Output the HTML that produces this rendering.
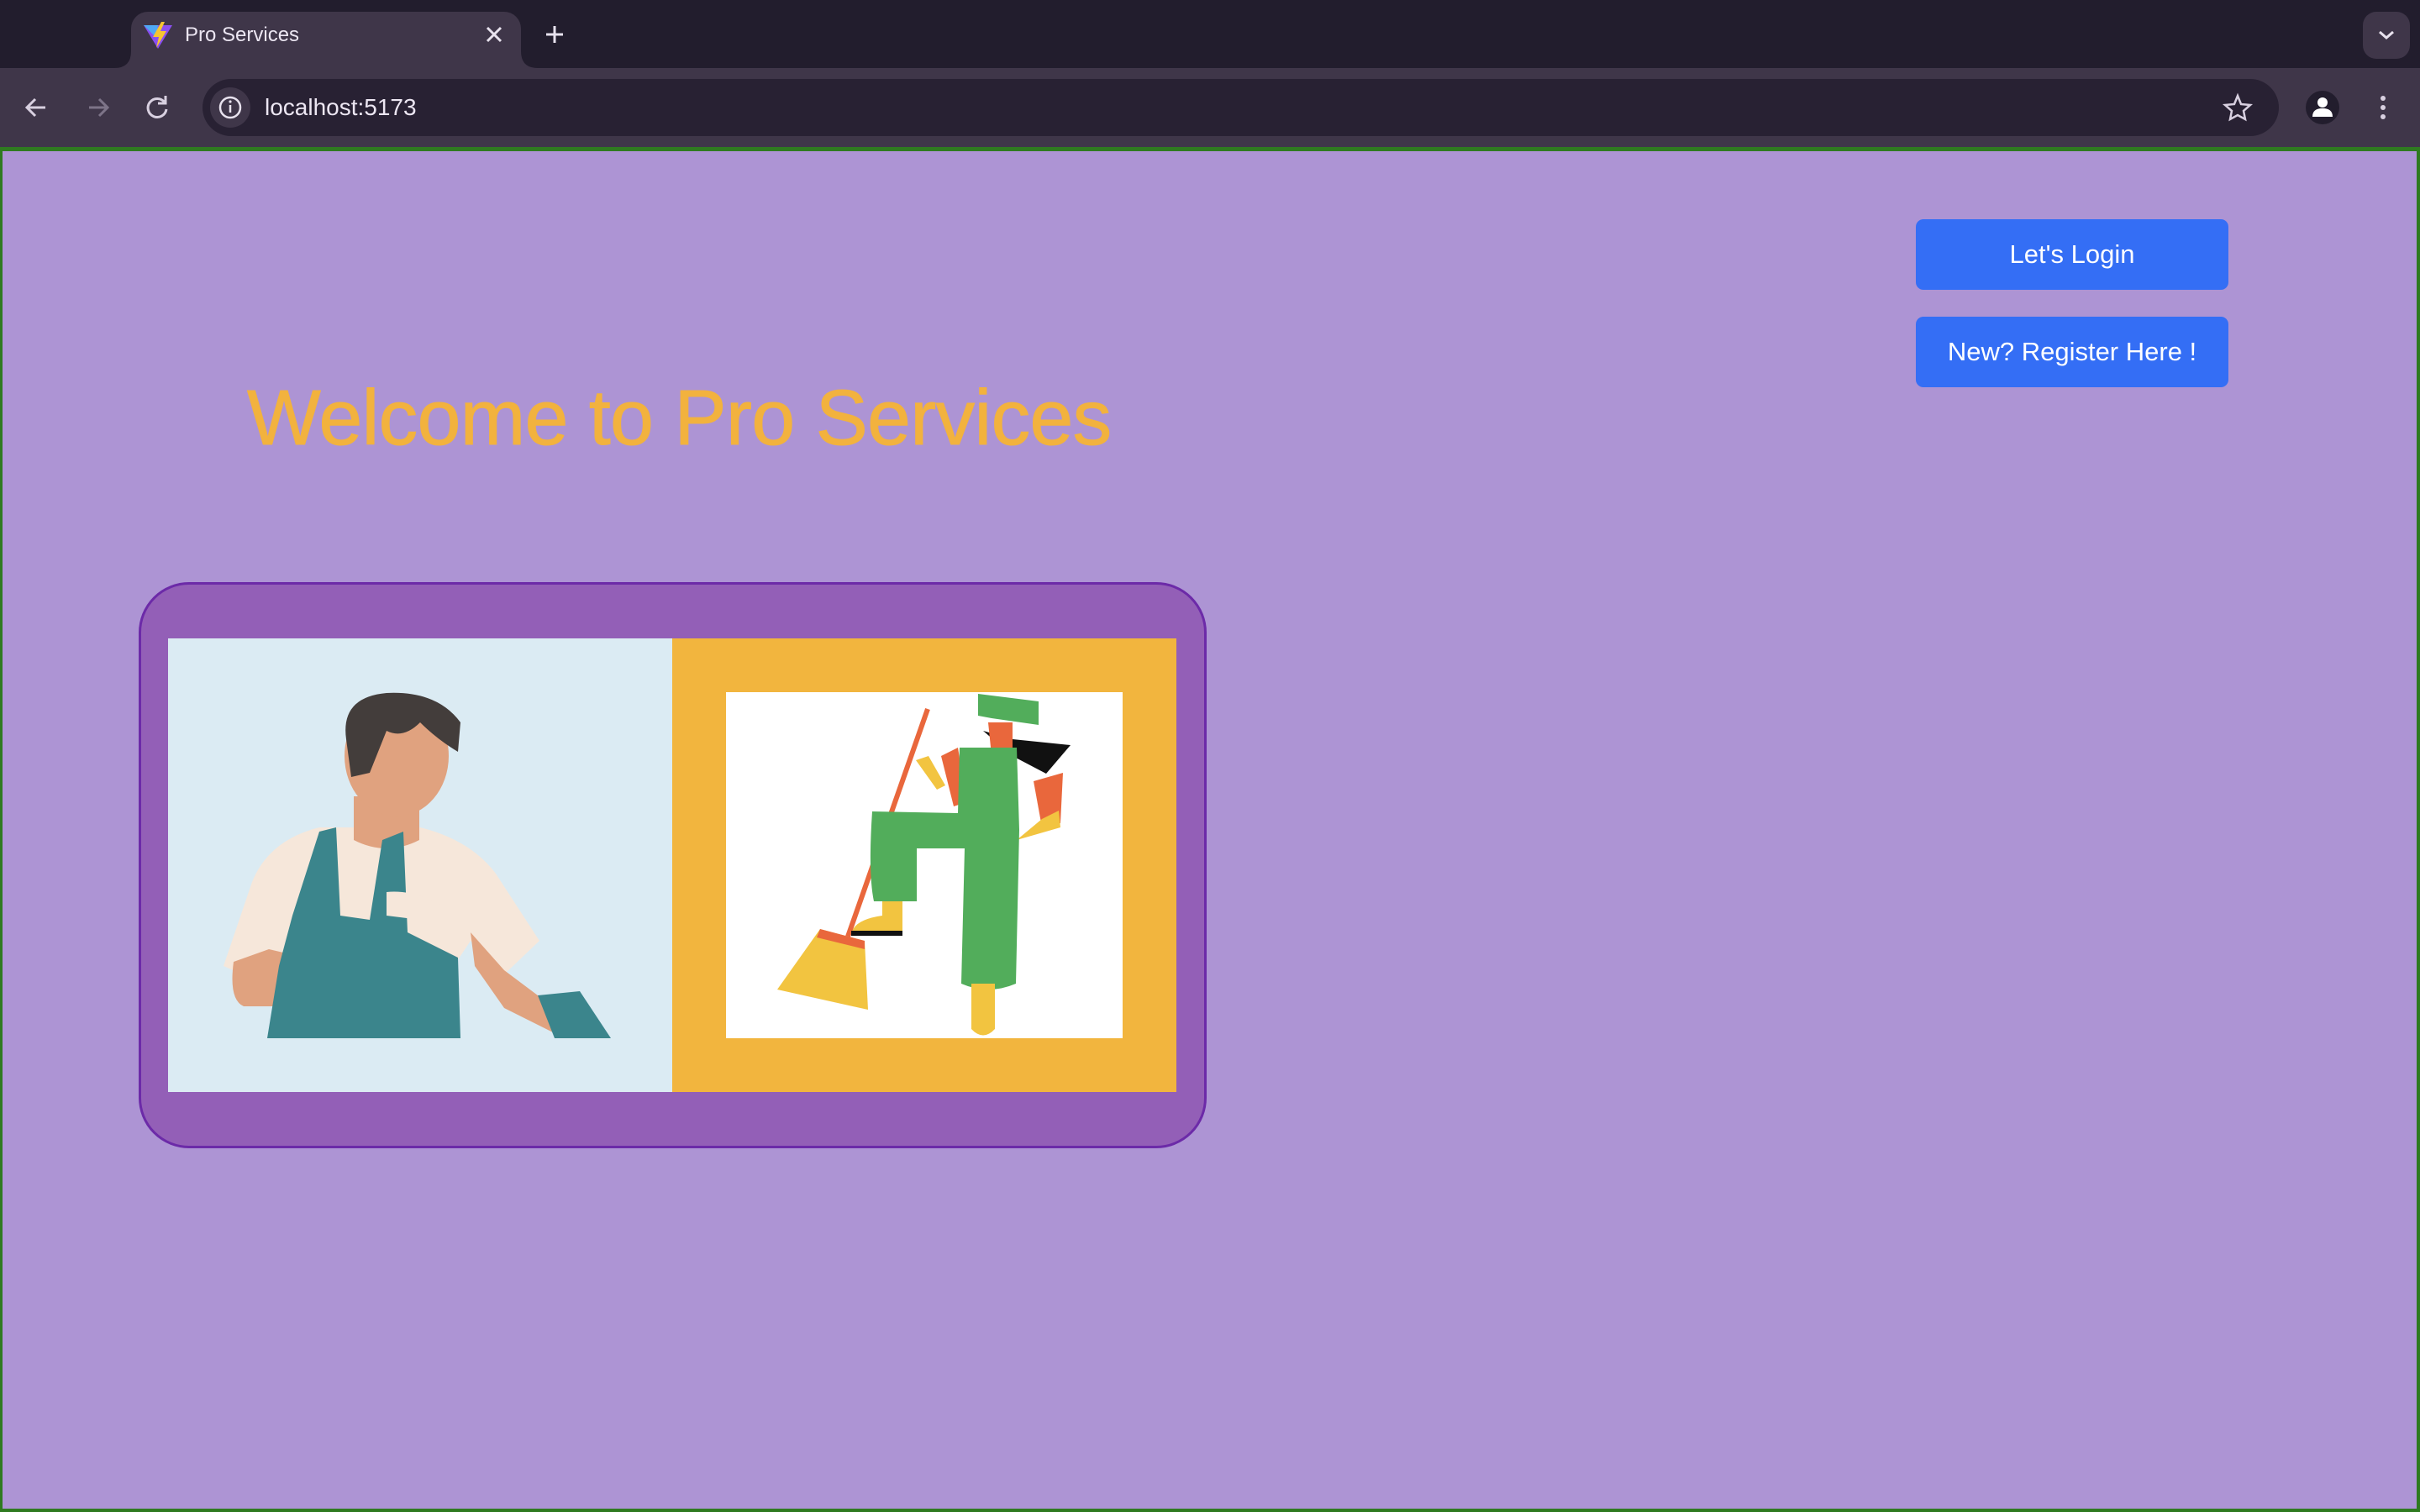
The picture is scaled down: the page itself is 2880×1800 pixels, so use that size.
<!DOCTYPE html>
<html><head><meta charset="utf-8"><style>
html,body{margin:0;padding:0;width:2880px;height:1800px;overflow:hidden;background:#221d2d;font-family:"Liberation Sans",Arial,sans-serif}
.abs{position:absolute}
.btn{position:absolute;left:2280px;width:372px;height:84px;background:#346ef5;border-radius:9px;color:#fff;font-size:31px;display:flex;align-items:center;justify-content:center}
</style></head><body>
<div class="abs" style="left:156px;top:14px;width:464px;height:72px;background:#3f3649;border-radius:20px 20px 0 0"></div>
<svg class="abs" style="left:0;top:0" width="2880" height="180">
<path d="M136 81 Q156 81 156 61 L156 81 Z" fill="#3f3649"/>
<path d="M640 81 Q620 81 620 61 L620 81 Z" fill="#3f3649"/>
<path d="M171 30 L205 30 L188 58 Z" fill="#8a4ff0"/>
<path d="M171 30 L188 30 L186 45 Z" fill="#4fa8f5"/>
<path d="M192 26 L182 44 L189 44 L186 57 L198 37 L191 37 L196 26 Z" fill="#f6c531"/>
<path d="M580 33 L596 49 M596 33 L580 49" stroke="#e8e2ee" stroke-width="3"/>
<path d="M660 31 V51 M650 41 H670" stroke="#e8e2ee" stroke-width="3"/>
<rect x="2812" y="14" width="56" height="56" rx="16" fill="#3f3649"/>
<path d="M2832 38 L2840 45 L2848 38" stroke="#e8e2ee" stroke-width="3" fill="none"/>
<rect x="0" y="81" width="2880" height="96" rx="0" fill="#3f3649"/>
<rect x="241" y="94" width="2471" height="68" rx="34" fill="#282133"/>
<circle cx="274" cy="128" r="24" fill="#3f3649"/>
<circle cx="274" cy="128" r="12" stroke="#e8e2ee" stroke-width="2.5" fill="none"/>
<path d="M274 125 V134" stroke="#e8e2ee" stroke-width="2.5"/><circle cx="274" cy="121" r="1.6" fill="#e8e2ee"/>
<path d="M54 128 H32 M42 118 L32 128 L42 138" stroke="#d8d0e0" stroke-width="3" fill="none"/>
<path d="M106 128 H128 M118 118 L128 128 L118 138" stroke="#7d7488" stroke-width="3" fill="none"/>
<path d="M196 122 A11 11 0 1 0 198 130 M197 114 V123 H188" stroke="#d8d0e0" stroke-width="3" fill="none"/>
<path d="M2663 114 L2667 124 L2678 125 L2670 132 L2672 142 L2663 137 L2654 142 L2656 132 L2648 125 L2659 124 Z" stroke="#d8d0e0" stroke-width="2.5" fill="none"/>
<circle cx="2764" cy="128" r="20" fill="#221d2d"/>
<circle cx="2764" cy="122" r="6" fill="#fff"/><path d="M2752 139 Q2752 129 2764 129 Q2776 129 2776 139 Z" fill="#fff"/>
<circle cx="2836" cy="117" r="3" fill="#d8d0e0"/><circle cx="2836" cy="128" r="3" fill="#d8d0e0"/><circle cx="2836" cy="139" r="3" fill="#d8d0e0"/>
</svg>
<div class="abs" style="left:220px;top:28px;font-size:24px;color:#ece6f2">Pro Services</div>
<div class="abs" style="left:315px;top:112px;font-size:28px;color:#ece6f2">localhost:5173</div>
<div class="abs" style="left:0;top:175px;width:2880px;height:1625px;background:#2f7a20"></div>
<div class="abs" style="left:3px;top:180px;width:2873px;height:1616px;background:#ad94d4"></div>
<div class="abs" style="left:294px;top:444px;font-size:93px;color:#f2b23e;white-space:nowrap;letter-spacing:-0.6px;-webkit-text-stroke:1px #f2b23e">Welcome to Pro Services</div>
<div class="btn" style="top:261px">Let's Login</div>
<div class="btn" style="top:377px">New? Register Here !</div>
<div class="abs" style="left:165px;top:693px;width:1265px;height:668px;background:#935fb7;border:3px solid #6c2aa8;border-radius:60px"></div>
<svg class="abs" style="left:0;top:0" width="2880" height="1800">
<rect x="200" y="760" width="600" height="540" fill="#dbebf3"/>
<rect x="800" y="760" width="600" height="540" fill="#f2b53e"/>
<rect x="864" y="824" width="472" height="412" fill="#fff"/>
<path d="M266 1150 L300 1050 Q320 1000 380 985 L500 985 Q560 1000 590 1040 L642 1120 L600 1160 L560 1120 L540 1150 L300 1165 Z" fill="#f6e7da"/>
<path d="M278 1145 L320 1130 L405 1150 L405 1198 L290 1198 Q272 1190 278 1145 Z" fill="#e0a27f"/>
<path d="M560 1110 L600 1155 L640 1185 L690 1200 L660 1230 L600 1200 L565 1150 Z" fill="#e0a27f"/>
<path d="M421 948 L499 948 L499 1000 Q460 1020 421 1000 Z" fill="#e0a27f"/>
<ellipse cx="472" cy="900" rx="62" ry="72" fill="#e0a27f"/>
<path d="M412 880 Q405 830 460 825 Q520 822 548 860 L545 895 Q520 880 500 860 Q480 880 460 870 L440 920 L418 925 Z" fill="#433d3b"/>
<path d="M380 990 L400 985 L405 1090 L440 1095 L455 1000 L480 990 L485 1110 L545 1140 L548 1236 L318 1236 L332 1150 L348 1090 Z" fill="#3b858c"/>
<path d="M640 1185 L690 1180 L727 1236 L660 1236 Z" fill="#3b858c"/>
<path d="M460 1062 Q500 1058 546 1090 L540 1100 L460 1090 Z" fill="#f6e7da"/>
<path d="M1104 844 L1009 1115" stroke="#e9673c" stroke-width="6"/>
<path d="M976 1106 L1029 1120 L1033 1202 L925 1178 Z" fill="#f2c440"/>
<path d="M976 1106 L1029 1120 L1029 1130 L972 1116 Z" fill="#e9673c"/>
<path d="M1170 870 L1205 880 L1274 887 L1245 921 L1205 900 Z" fill="#111"/>
<path d="M1176 860 L1205 860 L1205 899 L1180 899 Z" fill="#e9673c"/>
<path d="M1164 826 L1236 835 L1236 863 L1180 855 L1164 852 Z" fill="#52ad5b"/>
<path d="M1120 900 L1140 890 L1150 955 L1135 960 Z" fill="#e9673c"/>
<path d="M1230 930 L1265 920 L1262 980 L1240 985 Z" fill="#e9673c"/>
<path d="M1090 905 L1105 900 L1125 935 L1115 940 Z" fill="#f2c440"/>
<path d="M1240 975 L1260 965 L1262 985 L1210 1000 Z" fill="#f2c440"/>
<path d="M1142 890 L1210 890 L1213 988 L1209 1171 Q1176 1185 1144 1171 L1148 1010 L1091 1010 L1091 1073 L1040 1073 Q1033 1040 1038 966 L1140 968 Z" fill="#52ad5b"/>
<path d="M1156 1171 L1184 1171 L1184 1225 Q1170 1240 1156 1225 Z" fill="#f2c440"/>
<path d="M1050 1073 L1074 1073 L1074 1113 L1013 1113 Q1015 1095 1050 1090 Z" fill="#f2c440"/>
<rect x="1013" y="1108" width="61" height="6" fill="#111"/>
</svg>
</body></html>
